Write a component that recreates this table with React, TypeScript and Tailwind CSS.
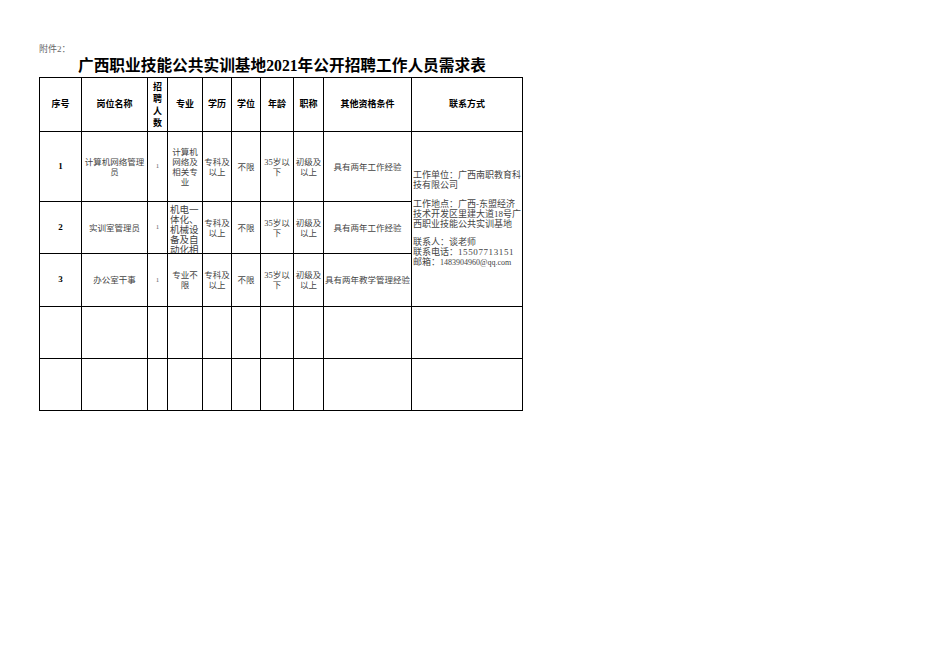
import React from 'react'

const font = { fontFamily: '"Liberation Serif", "Noto Sans CJK SC", serif' }

const cols = [42, 66, 20, 35, 29, 29, 33, 30, 88, 111]

type Row = {
    no: string
    name: string
    major: string
    edu: string
    degree: string
    age: string
    title: string
    other: string
}

const rows: Row[] = [
    { no: '1', name: '计算机网络管理员', major: '计算机网络及相关专业', edu: '专科及以上', degree: '不限', age: '35岁以下', title: '初级及以上', other: '具有两年工作经验' },
    { no: '2', name: '实训室管理员', major: '机电一体化、机械设备及自动化相关专业', edu: '专科及以上', degree: '不限', age: '35岁以下', title: '初级及以上', other: '具有两年工作经验' },
    { no: '3', name: '办公室干事', major: '专业不限', edu: '专科及以上', degree: '不限', age: '35岁以下', title: '初级及以上', other: '具有两年教学管理经验' },
]

const heights = ['h-[70px]', 'h-[52px]', 'h-[53px]']

const td = 'border border-black text-center align-middle p-0'
const body = 'text-[8.5px] leading-[10px] text-[#444] px-[1px]'

export default function App() {
    return (
        <div className="min-h-screen bg-white pl-[39px] pt-[43px]" style={font}>
            <div className="text-[9px] leading-[12px] text-[#666]">附件2：</div>
            <h1 className="pl-[39px] text-[15.7px] leading-[22px] font-bold text-black">
                广西职业技能公共实训基地2021年公开招聘工作人员需求表
            </h1>
            <table className="table-fixed border-collapse border border-black w-[484px]">
                <colgroup>
                    {cols.map((w, i) => (
                        <col key={i} style={{ width: w }} />
                    ))}
                </colgroup>
                <thead>
                    <tr className="h-[54px] text-[9px] leading-[11px] font-bold text-black">
                        <th className={td}>序号</th>
                        <th className={td}>岗位名称</th>
                        <th className={td}>
                            <div className="leading-[12px]">招<br />聘<br />人<br />数</div>
                        </th>
                        <th className={td}>专业</th>
                        <th className={td}>学历</th>
                        <th className={td}>学位</th>
                        <th className={td}>年龄</th>
                        <th className={td}>职称</th>
                        <th className={td}>其他资格条件</th>
                        <th className={td}>联系方式</th>
                    </tr>
                </thead>
                <tbody>
                    {rows.map((r, i) => (
                        <tr key={r.no} className={heights[i]}>
                            <td className={`${td} text-[9px] font-bold text-black`}>{r.no}</td>
                            <td className={td}><div className={body}>{r.name}</div></td>
                            <td className={td}><div className="text-[7px] text-[#666]">1</div></td>
                            {i === 1 ? (
                                <td className={`${td} align-top`}>
                                    <div className="h-[51px] overflow-hidden pt-[3px] pl-[2px] text-left text-[9.5px] leading-[10px] text-[#444]">
                                        {r.major}
                                    </div>
                                </td>
                            ) : (
                                <td className={td}><div className={body}>{r.major}</div></td>
                            )}
                            <td className={td}><div className={body}>{r.edu}</div></td>
                            <td className={td}><div className={body}>{r.degree}</div></td>
                            <td className={td}><div className={body}>{r.age}</div></td>
                            <td className={td}><div className={body}>{r.title}</div></td>
                            <td className={td}><div className={body}>{r.other}</div></td>
                            {i === 0 && (
                                <td rowSpan={3} className="border border-black align-middle text-left p-0">
                                    <div className="pl-[1px] text-[9px] leading-[10px] text-[#444] whitespace-normal">
                                        <p>工作单位：广西南职教育科技有限公司</p>
                                        <p className="mt-[9px]">工作地点：广西-东盟经济技术开发区里建大道18号广西职业技能公共实训基地</p>
                                        <p className="mt-[8px]">联系人：谈老师</p>
                                        <p className="whitespace-nowrap">联系电话：<span className="tracking-[0.6px]">15507713151</span></p>
                                        <p className="whitespace-nowrap">邮箱：<span className="text-[8px]">1483904960@qq.com</span></p>
                                    </div>
                                </td>
                            )}
                        </tr>
                    ))}
                    {[0, 1].map((k) => (
                        <tr key={k} className="h-[52px]">
                            {cols.map((_, j) => (
                                <td key={j} className={td} />
                            ))}
                        </tr>
                    ))}
                </tbody>
            </table>
        </div>
    )
}
